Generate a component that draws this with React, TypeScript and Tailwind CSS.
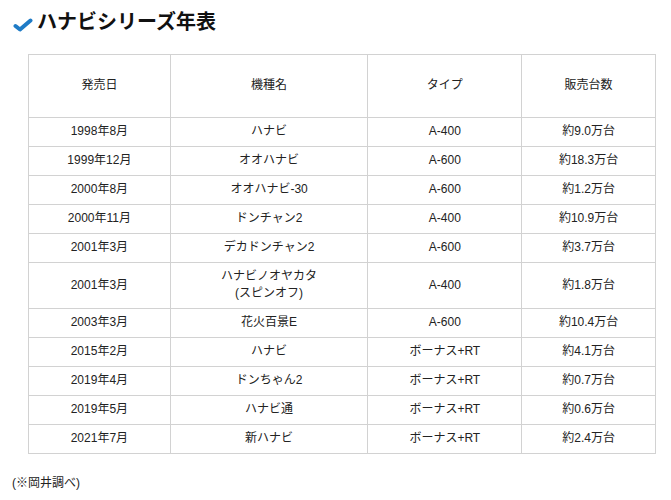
const rows: [string, string[], string, string][] = [
  ["1998年8月", ["ハナビ"], "A-400", "約9.0万台"],
  ["1999年12月", ["オオハナビ"], "A-600", "約18.3万台"],
  ["2000年8月", ["オオハナビ-30"], "A-600", "約1.2万台"],
  ["2000年11月", ["ドンチャン2"], "A-400", "約10.9万台"],
  ["2001年3月", ["デカドンチャン2"], "A-600", "約3.7万台"],
  ["2001年3月", ["ハナビノオヤカタ", "(スピンオフ)"], "A-400", "約1.8万台"],
  ["2003年3月", ["花火百景E"], "A-600", "約10.4万台"],
  ["2015年2月", ["ハナビ"], "ボーナス+RT", "約4.1万台"],
  ["2019年4月", ["ドンちゃん2"], "ボーナス+RT", "約0.7万台"],
  ["2019年5月", ["ハナビ通"], "ボーナス+RT", "約0.6万台"],
  ["2021年7月", ["新ハナビ"], "ボーナス+RT", "約2.4万台"],
];

const font = { fontFamily: '"Liberation Sans", Arial, "Noto Sans CJK JP", sans-serif' };

export default function App() {
  return (
    <div className="w-[671px] h-[500px] bg-white text-[#222]" style={font}>
      <div className="flex items-center pl-[13px] pt-[10px] h-[34px]">
        <svg width="20" height="14" viewBox="0 0 20 14" className="mt-[5px]">
          <path d="M2.5 8 L7 11.5 L17.5 2.5" fill="none" stroke="#1f7bc6" strokeWidth="4" strokeLinecap="round" strokeLinejoin="round" />
        </svg>
        <h2 className="ml-[4px] text-[20px] font-bold leading-[24px] text-[#111]">ハナビシリーズ年表</h2>
      </div>
      <table className="ml-[28px] mt-[20px] w-[628px] border-collapse text-[12px] leading-[17px] text-center">
        <colgroup>
          <col className="w-[142px]" />
          <col className="w-[198px]" />
          <col className="w-[154px]" />
          <col className="w-[134px]" />
        </colgroup>
        <thead>
          <tr>
            {["発売日", "機種名", "タイプ", "販売台数"].map((h) => (
              <th key={h} className="border border-[#d2d2d2] font-normal pt-[22px] pb-[23px]">
                {h}
              </th>
            ))}
          </tr>
        </thead>
        <tbody>
          {rows.map((r, i) => (
            <tr key={i}>
              <td className="border border-[#d2d2d2] pt-[5px] pb-[6px]">{r[0]}</td>
              <td className="border border-[#d2d2d2] pt-[5px] pb-[6px]">
                {r[1].map((l) => (
                  <div key={l}>{l}</div>
                ))}
              </td>
              <td className="border border-[#d2d2d2] pt-[5px] pb-[6px]">{r[2]}</td>
              <td className="border border-[#d2d2d2] pt-[5px] pb-[6px]">{r[3]}</td>
            </tr>
          ))}
        </tbody>
      </table>
      <p className="ml-[12px] mt-[21px] text-[12px] leading-[17px]">(※岡井調べ)</p>
    </div>
  );
}
